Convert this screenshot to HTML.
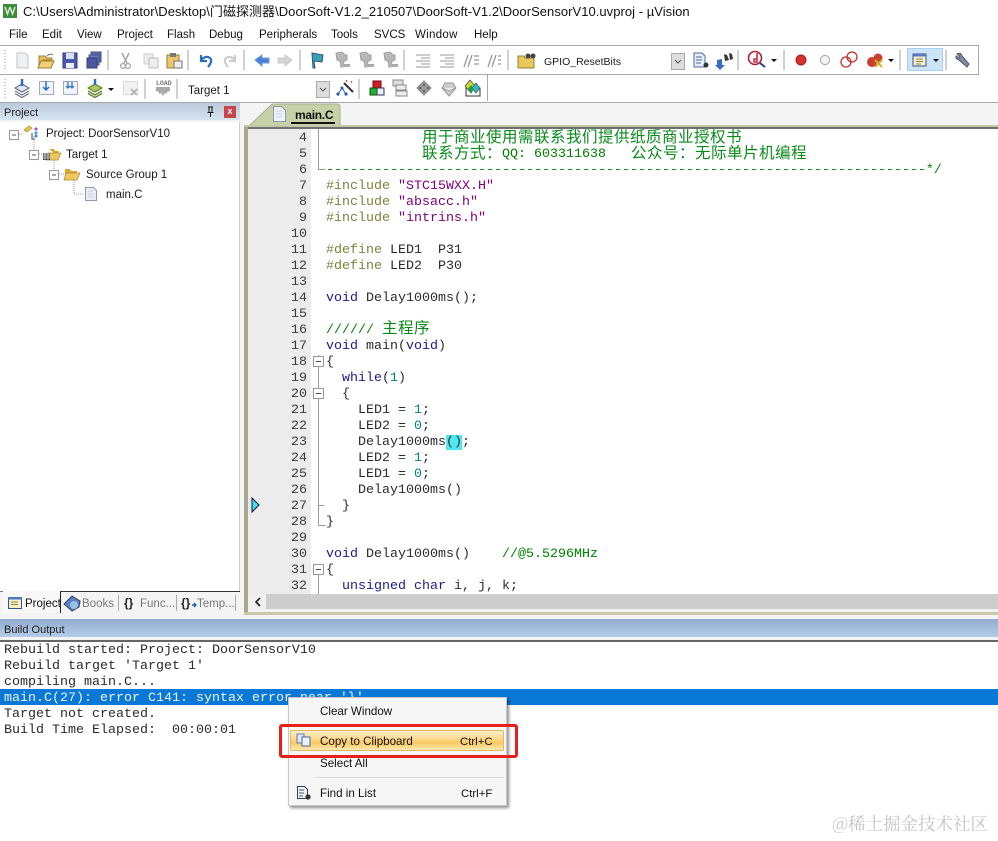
<!DOCTYPE html>
<html><head><meta charset="utf-8">
<style>
html,body{margin:0;padding:0;background:#fff}
body{width:998px;height:841px;position:relative;overflow:hidden;font-family:"Liberation Sans","Noto Sans CJK SC",sans-serif;font-size:12px;color:#111}
.a{position:absolute;white-space:pre}
.ui{position:absolute;white-space:pre;line-height:16px;font-size:11.5px;color:#1a1a1a;margin-top:1px}
.l{position:absolute;left:326px;white-space:pre;font:13.33px/16px "Liberation Mono","Noto Sans CJK SC",monospace;color:#2a2a2a;height:16px;margin-top:3px}
.n{position:absolute;left:270px;width:37px;text-align:right;font:13.33px/16px "Liberation Mono",monospace;color:#3a3a3a;height:16px;margin-top:3px}
.o{position:absolute;left:4px;white-space:pre;font:13.33px/16px "Liberation Mono",monospace;color:#2a2a2a;height:16px;margin-top:2px}
.k{color:#1a1a90}.p{color:#808040}.s{color:#800080}.d{color:#008080}.g{color:#008000}
.cn{position:absolute;white-space:pre;font:15.5px/16px "Noto Sans CJK SC",sans-serif;color:#0a8a1a;height:16px}
.m{position:absolute;white-space:pre;font-size:11.5px;line-height:16px;color:#111;margin-top:1px}
</style></head><body>

<!-- backgrounds -->
<div class="a" style="left:0;top:45px;width:978px;height:28px;border-top:1px solid #a9a9a9;border-bottom:1px solid #a9a9a9;border-right:1px solid #a9a9a9"></div>
<div class="a" style="left:0;top:74px;width:487px;height:27px;border-right:1px solid #a9a9a9"></div>
<div class="a" style="left:0;top:102px;width:998px;height:539px;background:#f4f4f4;border-top:1px solid #a9a9a9"></div>

<!-- title -->
<svg class="a" style="left:3px;top:4px" width="15" height="15"><rect width="14" height="14" fill="#3d8b3d"/><path d="M2 3l2.5 7 2.5-7 M7 3l2.5 7L12 3" stroke="#d8e8c8" stroke-width="1.5" fill="none"/></svg>
<div class="a" style="left:23px;top:4px;line-height:16px;font-size:13px;color:#111;letter-spacing:.04px">C:\Users\Administrator\Desktop\门磁探测器\DoorSoft-V1.2_210507\DoorSoft-V1.2\DoorSensorV10.uvproj - µVision</div>

<!-- menu -->
<div class="m" style="left:9px;top:26px">File</div>
<div class="m" style="left:42px;top:26px">Edit</div>
<div class="m" style="left:77px;top:26px">View</div>
<div class="m" style="left:117px;top:26px">Project</div>
<div class="m" style="left:167px;top:26px">Flash</div>
<div class="m" style="left:209px;top:26px">Debug</div>
<div class="m" style="left:259px;top:26px">Peripherals</div>
<div class="m" style="left:331px;top:26px">Tools</div>
<div class="m" style="left:374px;top:26px">SVCS</div>
<div class="m" style="left:415px;top:26px;letter-spacing:.3px">Window</div>
<div class="m" style="left:474px;top:26px">Help</div>

<!-- toolbar icons -->
<div class="a" style="left:907px;top:48px;width:36px;height:23px;background:#cce4f7;border:1px solid #a8d0f0;box-sizing:border-box"></div>
<svg class="a" style="left:0;top:45px" width="998" height="58" viewBox="0 45 998 58">
<defs>
<g id="gf"><path d="M-6 -7l6 -1 3 3 2 0 0 5 -3 1-1 6-2 0-1-6-3-1z" fill="#b8b8b8" stroke="#a0a0a0"/><path d="M2 4h6v3h-6z" fill="#aaa"/></g>
</defs>
<!-- grips -->
<path d="M5 50v20M5 79v20" stroke="#999" stroke-width="1" stroke-dasharray="1 2"/>
<!-- separators -->
<path d="M108 50v20M188 50v20M244 50v20M300 50v20M404 50v20M508 50v20M738 50v20M784 50v20M900 50v20M946 50v20M145 79v20M177 79v20M359 79v20" stroke="#a0a0a0"/>
<!-- new -->
<path d="M17 53h8l3 3v12H17z" fill="#eef0f6" stroke="#c0c4d0"/>
<!-- open -->
<path d="M39 56h6l2 2h5v2h-9l-4 8z" fill="#e8c060" stroke="#a08030"/><path d="M41 61h13l-3 7H38z" fill="#f0d078" stroke="#a08030"/><path d="M47 56q3-3 6-1" stroke="#777" fill="none"/>
<!-- save -->
<rect x="63" y="53" width="14" height="15" fill="#4a58b0" stroke="#303c80"/><rect x="66" y="53" width="8" height="6" fill="#d8e0f0"/><rect x="66" y="63" width="8" height="5" fill="#eef"/>
<!-- save all -->
<rect x="91" y="52" width="10" height="10" fill="#5a68a8" stroke="#444f88"/><rect x="89" y="55" width="10" height="10" fill="#6a78b8" stroke="#444f88"/><rect x="87" y="58" width="10" height="10" fill="#4a58a0" stroke="#333c78"/>
<!-- cut -->
<path d="M122 53l5 10M129 53l-5 10" stroke="#aaa" stroke-width="1.6"/><circle cx="123" cy="66" r="2.4" fill="none" stroke="#aaa" stroke-width="1.4"/><circle cx="128" cy="66" r="2.4" fill="none" stroke="#aaa" stroke-width="1.4"/>
<!-- copy -->
<rect x="144" y="54" width="9" height="10" fill="#eee" stroke="#ccc"/><rect x="149" y="58" width="9" height="10" fill="#eee" stroke="#bbb"/>
<!-- paste -->
<rect x="167" y="55" width="12" height="13" fill="#e8c868" stroke="#9a8030"/><rect x="170" y="53" width="6" height="4" fill="#777"/><rect x="174" y="61" width="8" height="7" fill="#eee" stroke="#777"/>
<!-- undo -->
<path d="M201 55v6h6M201 60q5-5 9-2 3 3-2 9" stroke="#2a6cc0" stroke-width="2.2" fill="none"/>
<!-- redo -->
<path d="M235 55v6h-6M235 60q-5-5-9-2-3 3 2 9" stroke="#ccc" stroke-width="2.2" fill="none"/>
<!-- back/fwd -->
<path d="M255 60l7-5v3h7v5h-7v3z" fill="#4a80d8" stroke="#6a9ce0"/>
<path d="M292 60l-7-5v3h-7v5h7v3z" fill="#d4d4d4" stroke="#ccc"/>
<!-- flag -->
<path d="M312 53l11 2-1 7-8-1 1 7h-2z" fill="#3aa0b8" stroke="#357"/>
<use href="#gf" x="342" y="60"/><use href="#gf" x="366" y="60"/><use href="#gf" x="390" y="60"/>
<!-- indent -->
<path d="M416 55h14M421 58h9M416 61h14M421 64h9M416 67h14M440 55h14M445 58h9M440 61h14M445 64h9M440 67h14" stroke="#999"/>
<path d="M464 67l4-12M468 67l4-12M474 56h5M474 60h5M474 64h5M488 67l4-12M492 67l4-12M498 56h3M498 60h3M498 64h3" stroke="#999" stroke-width="1.3"/>
<!-- find folder -->
<path d="M518 56h6l1 2h9v10h-16z" fill="#e8c858" stroke="#9a8030"/><circle cx="528" cy="56" r="2.5" fill="#444"/><circle cx="533" cy="56" r="2.5" fill="#444"/>
<!-- combo1 -->
<rect x="671.5" y="53.5" width="13" height="16" fill="#ddd" stroke="#aaa"/><path d="M675 60l3 3 3-3" stroke="#555" fill="none"/>
<!-- doc find -->
<path d="M694 53h8l3 3v11h-11z" fill="#e8eef8" stroke="#4a68a8"/><path d="M696 57h6M696 60h6M696 63h5" stroke="#4a68a8"/><circle cx="706" cy="65" r="2.5" fill="#333"/>
<!-- binoc -->
<path d="M717 60l5-1v6h3l-5 5-5-5h2z" fill="#3a6cc8"/><path d="M724 54l3 1 2 5-4 1zM729 53l3 1 1 5-3 1z" fill="#333"/>
<!-- debug -->
<circle cx="755" cy="58" r="6.5" fill="#fff" stroke="#b02030" stroke-width="1.6"/><path d="M757 53v9h-3v-3h3" stroke="#d02030" stroke-width="1.5" fill="none"/><path d="M760 63l5 4" stroke="#204090" stroke-width="2"/>
<path d="M771 59h6l-3 3z M888 59h6l-3 3z M933 59h6l-3 3z M108 88h6l-3 3z" fill="#111"/>
<!-- bp -->
<circle cx="801" cy="60" r="5" fill="#d83030" stroke="#a82020"/>
<circle cx="825" cy="60" r="4.6" fill="#f4f4f4" stroke="#b0b0b0" stroke-width="1.2"/>
<circle cx="846" cy="62" r="5" fill="#fff" stroke="#c03030" stroke-width="1.3"/><circle cx="852" cy="57" r="5" fill="none" stroke="#c03030" stroke-width="1.3"/>
<circle cx="872" cy="62" r="5" fill="#c84030"/><circle cx="878" cy="58" r="4.5" fill="#c84030"/><path d="M875 60l7 7M882 60l-7 7" stroke="#d8b030" stroke-width="2"/>
<!-- window -->
<rect x="913" y="54" width="13" height="12" fill="#f0f0d8" stroke="#405080"/><rect x="913" y="54" width="13" height="2.5" fill="#5a78c0"/><path d="M916 59h7M916 61.500h7M916 64h5" stroke="#a08030"/>
<!-- wrench -->
<path d="M957 54q4-2 5 2l7 8-2 3-8-7q-4-1-3-4l3 2 1-1z" fill="#7a8ea8" stroke="#556"/>

<!-- row 2 -->
<path d="M15 88l7-4 7 4-7 4z" fill="#dfe8f4" stroke="#557"/><path d="M15 91l7 4 7-4M15 93.500l7 4 7-4" fill="none" stroke="#557"/><path d="M22 79v7" stroke="#2a70c0" stroke-width="2.5"/>
<g stroke="#557" stroke-dasharray="1 1" fill="#f0f4fa"><rect x="39.500" y="81.500" width="14" height="13"/></g><path d="M46 81v8M43 87l3 3 3-3" stroke="#2a70c0" stroke-width="1.5" fill="none"/>
<g stroke="#557" stroke-dasharray="1 1" fill="#f0f4fa"><rect x="63.500" y="81.500" width="14" height="13"/></g><path d="M68 81v7M72 81v7M66 86l2 2 2-2M70 86l2 2 2-2" stroke="#2a70c0" stroke-width="1.2" fill="none"/>
<path d="M88 88l7-4 7 4-7 4z" fill="#a8c868" stroke="#570"/><path d="M88 91l7 4 7-4M88 93.500l7 4 7-4" fill="none" stroke="#5a8030" stroke-width="1.3"/><path d="M95 79v6" stroke="#2a70c0" stroke-width="2.5"/>
<g stroke="#bbb" stroke-dasharray="1 1" fill="#f2f2f2"><rect x="123.500" y="81.500" width="14" height="13"/></g><path d="M131 89l6 6M137 89l-6 6" stroke="#aaa" stroke-width="1.5"/>
<text x="156" y="85" font-family="Liberation Mono" font-size="6.500" fill="#777" font-weight="bold">LOAD</text>
<path d="M156 87h14v4l-3 1v2l-2-1-2 3-2-3-2 1v-2l-3-1z" fill="#aaa"/>
<rect x="316.500" y="81.500" width="13" height="16" fill="#ddd" stroke="#aaa"/><path d="M320 88l3 3 3-3" stroke="#555" fill="none"/>
<!-- wand -->
<path d="M344 83l9 9" stroke="#333" stroke-width="2"/><path d="M346 80l1 2M352 81l-1 2" stroke="#d03030"/><circle cx="342" cy="88" r="1.500" fill="#2a5ca8"/><circle cx="338" cy="94" r="1.600" fill="#2a5ca8"/><circle cx="346" cy="94" r="1.600" fill="#2a5ca8"/><path d="M342 88l-4 6M342 88l4 6" stroke="#2a5ca8"/>
<!-- comp -->
<rect x="373" y="81" width="8" height="7" fill="#d02020" stroke="#702"/><rect x="370" y="88" width="7" height="7" fill="#20b030" stroke="#050"/><rect x="377" y="88" width="7" height="7" fill="#e8eef8" stroke="#335"/>
<rect x="393" y="80" width="10" height="6" fill="#ddd" stroke="#888"/><rect x="396" y="85" width="10" height="5" fill="#eee" stroke="#888"/><rect x="396" y="91" width="11" height="5" fill="#eee" stroke="#888"/>
<path d="M424 81l7 7-7 7-7-7z" fill="#999" stroke="#888"/><circle cx="424" cy="85" r="1" fill="#555"/><circle cx="420" cy="88" r="1" fill="#555"/><circle cx="428" cy="88" r="1" fill="#555"/><circle cx="424" cy="91" r="1" fill="#555"/>
<path d="M449 96l-7-8 3-5h8l3 5z" fill="#ccc" stroke="#999"/><path d="M442 88l7 3 7-3" fill="#eee" stroke="#999"/>
<path d="M466 96v-8h14v8z" fill="#fff" stroke="#333"/><path d="M470 80l5 6-5 6-5-6z" fill="#c8d830" stroke="#333" stroke-width=".6"/><path d="M476 83l4 5-4 5-4-5z" fill="#30b8c8" stroke="#333" stroke-width=".6"/><path d="M471 85l3 4-3 5-3-5z" fill="#20a040"/>
</svg>
<div class="ui" style="left:544px;top:53px;font-size:10.5px">GPIO_ResetBits</div>
<div class="ui" style="left:188px;top:82px;font-size:11.5px">Target 1</div>

<!-- Project pane -->
<div class="a" style="left:0;top:103px;width:240px;height:17px;background:linear-gradient(#bccadb,#d6e3f1)"></div>
<div class="ui" style="left:4px;top:104px;font-size:11px;color:#222">Project</div>
<svg class="a" style="left:205px;top:105px" width="12" height="13"><path d="M3 2h5M4 2v5M7 2v5M2.500 7.500h6M5.500 8v4" stroke="#111" fill="none"/></svg>
<div class="a" style="left:224px;top:106px;width:12px;height:12px;background:#c9444a;color:#fff;font:bold 9px/11px 'Liberation Sans';text-align:center">x</div>
<div class="a" style="left:0;top:122px;width:239px;height:469px;background:#fff;border-right:1px solid #cfcfcf;border-bottom:1px solid #777"></div>
<svg class="a" style="left:0;top:123px" width="240" height="90" viewBox="0 122 240 90">
<path d="M19 133h4M34 135v14M39 153h5M54 155v14M59 173h5M74 177v16h9" stroke="#999" stroke-dasharray="1 1" fill="none"/>
<g fill="#fff" stroke="#999"><rect x="9.500" y="129.500" width="9" height="9"/><rect x="29.500" y="149.500" width="9" height="9"/><rect x="49.500" y="169.500" width="9" height="9"/></g>
<path d="M12 134h4M32 154h4M52 174h4" stroke="#555"/>
<path d="M24 129l5-4 3 2-5 4z" fill="#e8c850" stroke="#a08020" stroke-width=".6"/><path d="M34 128l2-2 2 2-2 2z" fill="#b050c8"/><path d="M34 132l2-2 2 2-2 2z" fill="#50a0d8"/><path d="M32 132v6h3" stroke="#446" fill="none"/><path d="M34 135l2 2 2-2-2-2z" fill="#5090d0"/>
<path d="M49 148h5l1 2h4l-1 2h-4z" fill="#d8a830"/><path d="M48 152h13l-3 7H46z" fill="#eec860" stroke="#b08830" stroke-width=".7"/><rect x="43" y="152" width="7" height="7" fill="#333"/><path d="M43 153h7M43 155h7M43 157h7M45 152v7M48 152v7" stroke="#eee" stroke-width=".7"/>
<path d="M65 168h5l1 2h6v2h-10l-2 6z" fill="#d8a830"/><path d="M66 172h14l-3 7H64z" fill="#eec860" stroke="#b08830" stroke-width=".7"/>
<path d="M85.500 186.500h8l3 3v10h-11z" fill="#e8eef8" stroke="#8a9ab0"/><path d="M88 190h5M88 193h6M88 196h6" stroke="#c8d0dc"/>
</svg>
<div class="ui" style="left:46px;top:125px">Project: DoorSensorV10</div>
<div class="ui" style="left:66px;top:146px">Target 1</div>
<div class="ui" style="left:86px;top:166px">Source Group 1</div>
<div class="ui" style="left:106px;top:186px">main.C</div>

<!-- pane tabs -->
<div class="a" style="left:60px;top:591px;width:180px;height:1px;background:#333"></div>
<div class="a" style="left:3px;top:591px;width:57px;height:22px;background:#f8f8f8;border-right:1px solid #222"></div>
<svg class="a" style="left:0;top:592px" width="240" height="22">
<rect x="8.500" y="5.500" width="13" height="11" fill="#f4f0c8" stroke="#305090"/><rect x="8" y="5" width="14" height="2.500" fill="#5078c0"/><path d="M11 10h7M11 12.500h7" stroke="#a08030"/>
<path d="M64 12l8-8 8 5-1 6-7 4z" fill="#5a80c8" stroke="#345"/><circle cx="74" cy="13" r="4" fill="#9ac0e8"/>
<path d="M118.500 3v16M176.500 3v16M235.500 3v16" stroke="#aaa"/>
<path d="M192 13h4M194 11l2 2-2 2" stroke="#2060c0" stroke-width="1.4" fill="none"/>
</svg>
<div class="ui" style="left:25px;top:595px;font-size:11.5px;color:#111">Project</div>
<div class="ui" style="left:82px;top:595px;font-size:11.5px;color:#777">Books</div>
<div class="a" style="left:124px;top:595px;font:bold 12px/16px 'Liberation Sans';color:#222">{}</div>
<div class="ui" style="left:140px;top:595px;font-size:11.5px;color:#777">Func...</div>
<div class="a" style="left:181px;top:595px;font:bold 12px/16px 'Liberation Sans';color:#222">{}</div>
<div class="ui" style="left:197px;top:595px;font-size:11.5px;color:#777">Temp...</div>

<!-- editor tab -->
<svg class="a" style="left:240px;top:103px" width="110" height="25">
<path d="M8 24L31 2q1-1 3-1h63q3 0 3 3v20z" fill="#c8d0a8" stroke="#a8b090"/>
</svg>
<svg class="a" style="left:272px;top:105px" width="16" height="18"><path d="M1.500 1.500h8l4 4v11h-12z" fill="#eef2fa" stroke="#8a9ab0"/><path d="M4 6h6M4 9h6M4 12h6" stroke="#c8d0dc"/></svg>
<div class="ui" style="left:295px;top:106px;font-size:12px;color:#111;font-weight:bold;letter-spacing:-.3px">main.C</div>
<div class="a" style="left:291px;top:122px;width:44px;height:2px;background:#111"></div>

<!-- editor -->
<div class="a" style="left:244px;top:125px;width:754px;height:2px;background:#c4c8a8"></div>
<div class="a" style="left:244px;top:127px;width:4px;height:485px;background:#a8a890"></div>
<div class="a" style="left:248px;top:127px;width:750px;height:467px;background:#fff;border-top:2px solid #707070;box-sizing:border-box"></div>
<div class="a" style="left:248px;top:129px;width:63px;height:465px;background:#ececec"></div>
<svg class="a" style="left:248px;top:127px" width="80" height="467" viewBox="248 127 80 467">
<path d="M318.500 129v40.500h7M318.500 355v170.500h7M318.500 574v20M319 505.500h5" stroke="#999" fill="none"/>
<rect x="313.500" y="356.500" width="10" height="10" fill="#fff" stroke="#999"/><path d="M316 361.500h5" stroke="#444"/>
<rect x="313.500" y="388.500" width="10" height="10" fill="#fff" stroke="#999"/><path d="M316 393.500h5" stroke="#444"/>
<rect x="313.500" y="564.500" width="10" height="10" fill="#fff" stroke="#999"/><path d="M316 569.500h5" stroke="#444"/>
<path d="M252 498l7 7-7 7z" fill="#40e0e8" stroke="#114"/>
</svg>
<div class="n" style="top:128px">4</div><div class="n" style="top:144px">5</div><div class="n" style="top:160px">6</div><div class="n" style="top:176px">7</div><div class="n" style="top:192px">8</div><div class="n" style="top:208px">9</div><div class="n" style="top:224px">10</div><div class="n" style="top:240px">11</div><div class="n" style="top:256px">12</div><div class="n" style="top:272px">13</div><div class="n" style="top:288px">14</div><div class="n" style="top:304px">15</div><div class="n" style="top:320px">16</div><div class="n" style="top:336px">17</div><div class="n" style="top:352px">18</div><div class="n" style="top:368px">19</div><div class="n" style="top:384px">20</div><div class="n" style="top:400px">21</div><div class="n" style="top:416px">22</div><div class="n" style="top:432px">23</div><div class="n" style="top:448px">24</div><div class="n" style="top:464px">25</div><div class="n" style="top:480px">26</div><div class="n" style="top:496px">27</div><div class="n" style="top:512px">28</div><div class="n" style="top:528px">29</div><div class="n" style="top:544px">30</div><div class="n" style="top:560px">31</div><div class="n" style="top:576px">32</div>

<div class="cn" style="left:422px;top:128px;letter-spacing:.5px">用于商业使用需联系我们提供纸质商业授权书</div>
<div class="cn" style="left:422px;top:144px;letter-spacing:.5px">联系方式：</div>
<div class="l g" style="left:502px;top:144px">QQ:</div>
<div class="l g" style="left:534px;top:144px">603311638</div>
<div class="cn" style="left:631px;top:144px;letter-spacing:.5px">公众号：无际单片机编程</div>
<div class="l g" style="top:160px">---------------------------------------------------------------------------*/</div>
<div class="l" style="top:176px"><span class="p">#include</span> <span class="s">"STC15WXX.H"</span></div>
<div class="l" style="top:192px"><span class="p">#include</span> <span class="s">"absacc.h"</span></div>
<div class="l" style="top:208px"><span class="p">#include</span> <span class="s">"intrins.h"</span></div>
<div class="l" style="top:240px"><span class="p">#define</span> LED1  P31</div>
<div class="l" style="top:256px"><span class="p">#define</span> LED2  P30</div>
<div class="l" style="top:288px"><span class="k">void</span> Delay1000ms();</div>
<div class="l g" style="top:320px">//////</div>
<div class="cn" style="left:382px;top:319px;letter-spacing:.5px">主程序</div>
<div class="l" style="top:336px"><span class="k">void</span> main(<span class="k">void</span>)</div>
<div class="l" style="top:352px">{</div>
<div class="l" style="top:368px">  <span class="k">while</span>(<span class="d">1</span>)</div>
<div class="l" style="top:384px">  {</div>
<div class="l" style="top:400px">    LED1 = <span class="d">1</span>;</div>
<div class="l" style="top:416px">    LED2 = <span class="d">0</span>;</div>
<div class="l" style="top:432px">    Delay1000ms<span style="background:#4de8f2">()</span>;</div>
<div class="l" style="top:448px">    LED2 = <span class="d">1</span>;</div>
<div class="l" style="top:464px">    LED1 = <span class="d">0</span>;</div>
<div class="l" style="top:480px">    Delay1000ms()</div>
<div class="l" style="top:496px">  }</div>
<div class="l" style="top:512px">}</div>
<div class="l" style="top:544px"><span class="k">void</span> Delay1000ms()    <span class="g">//@5.5296MHz</span></div>
<div class="l" style="top:560px">{</div>
<div class="l" style="top:576px">  <span class="k">unsigned</span> <span class="k">char</span> i, j, k;</div>

<!-- hscroll -->
<div class="a" style="left:248px;top:594px;width:750px;height:16px;background:#f0f0f0"></div>
<div class="a" style="left:266px;top:594px;width:732px;height:15px;background:#cdcdcd"></div>
<svg class="a" style="left:253px;top:597px" width="10" height="10"><path d="M7 1L3 5l4 4" stroke="#222" stroke-width="1.600" fill="none"/></svg>
<div class="a" style="left:244px;top:612px;width:754px;height:3px;background:#c8c8a8"></div>

<!-- build output -->
<div class="a" style="left:0;top:619px;width:998px;height:18px;background:linear-gradient(#94abcb,#b2cde9)"></div>
<div class="ui" style="left:4px;top:621px;font-size:11px;color:#222">Build Output</div>
<div class="a" style="left:0;top:640px;width:998px;height:201px;background:#fff;border-top:2px solid #666;box-sizing:border-box"></div>
<div class="o" style="top:641px">Rebuild started: Project: DoorSensorV10</div>
<div class="o" style="top:657px">Rebuild target 'Target 1'</div>
<div class="o" style="top:673px">compiling main.C...</div>
<div class="a" style="left:0;top:689px;width:998px;height:16px;background:#0a78d6"></div>
<div class="o" style="top:689px;color:#eaf4ff">main.C(27): error C141: syntax error near '}'</div>
<div class="o" style="top:705px">Target not created.</div>
<div class="o" style="top:721px">Build Time Elapsed:  00:00:01</div>

<!-- context menu -->
<div class="a" style="left:288px;top:697px;width:219px;height:109px;background:#f6f6f6;border:1px solid #c8c8c8;box-sizing:border-box;box-shadow:2px 2px 3px rgba(0,0,0,.45)"></div>
<div class="a" style="left:290px;top:730px;width:214px;height:21px;box-sizing:border-box;border:1px solid #e0b868;background:linear-gradient(#fdeec8,#fdd888 45%,#fbc860 60%,#fde8b0);border-radius:2px"></div>
<div class="a" style="left:315px;top:777px;width:189px;height:1px;background:#ddd"></div>
<div class="ui" style="left:320px;top:703px;font-size:11.6px;color:#111">Clear Window</div>
<div class="ui" style="left:320px;top:733px;font-size:11.6px;color:#111">Copy to Clipboard</div>
<div class="ui" style="left:460px;top:733px;font-size:11.4px;color:#111">Ctrl+C</div>
<div class="ui" style="left:320px;top:755px;font-size:11.6px;color:#111">Select All</div>
<div class="ui" style="left:320px;top:785px;font-size:11.6px;color:#111">Find in List</div>
<div class="ui" style="left:461px;top:785px;font-size:11.4px;color:#111">Ctrl+F</div>
<svg class="a" style="left:296px;top:733px" width="16" height="14"><rect x="1" y="1" width="7" height="9" fill="#dfe6f4" stroke="#5a78b8"/><rect x="6" y="4" width="8" height="9" fill="#eef2fa" stroke="#4a68a8"/></svg>
<svg class="a" style="left:296px;top:785px" width="16" height="16"><path d="M1.500 1.500h7l3 3v9h-10z" fill="#eef2fa" stroke="#345"/><path d="M3 5h5M3 8h5M3 11h4" stroke="#556"/><circle cx="12" cy="12" r="2.600" fill="#333"/></svg>

<div class="a" style="left:279px;top:724px;width:239px;height:34px;box-sizing:border-box;border:3px solid #e8201c;border-radius:3px"></div>

<div class="a" style="left:832px;top:813px;font:17.5px/22px 'Noto Serif CJK SC','Noto Sans CJK SC',serif;color:#c4c4c4">@稀土掘金技术社区</div>
</body></html>
